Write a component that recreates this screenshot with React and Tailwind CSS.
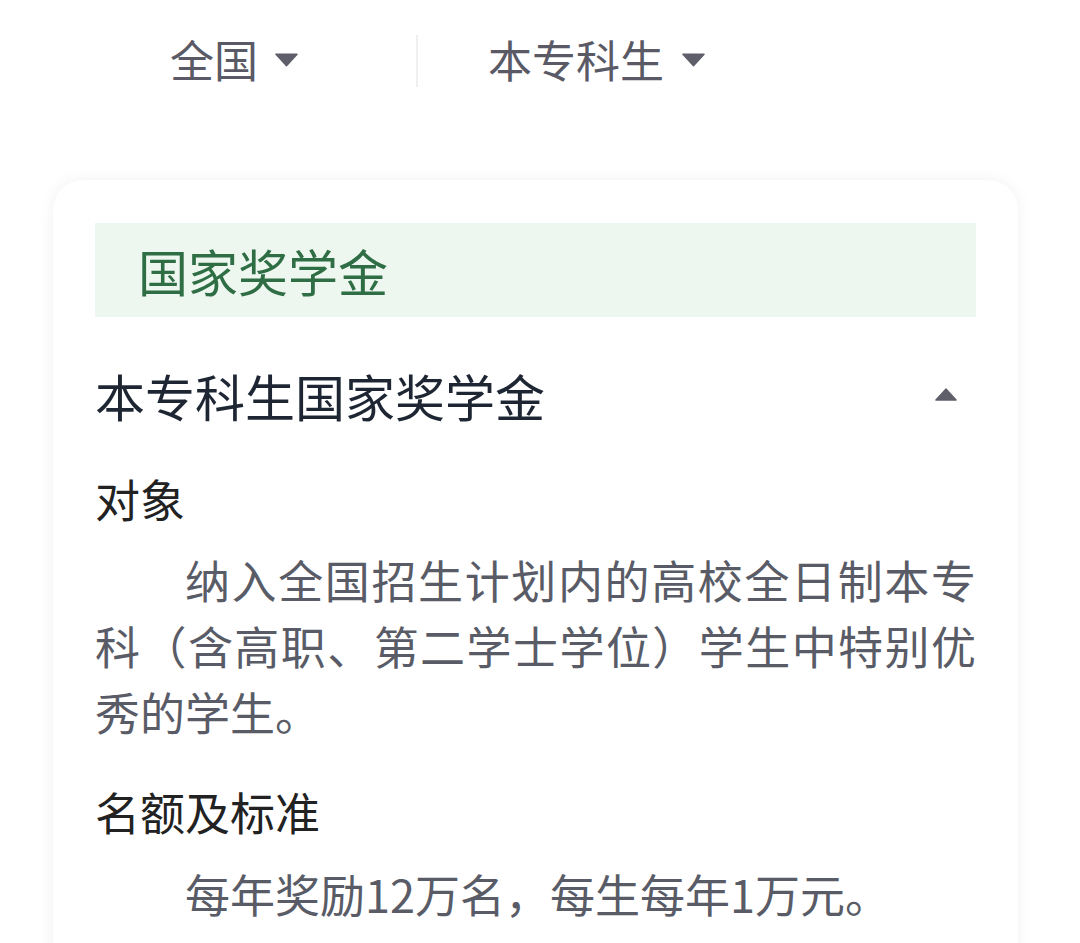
import React from "react";

const Down = ({ className }) => (
  <svg viewBox="0 0 24 14" className={className} fill="#5f5f6b">
    <path d="M1 1 L23 1 L12 13 Z" strokeLinejoin="round" stroke="#5f5f6b" strokeWidth="1.5" />
  </svg>
);

const Up = ({ className }) => (
  <svg viewBox="0 0 24 14" className={className} fill="#5f5f6b">
    <path d="M1 13 L23 13 L12 1 Z" strokeLinejoin="round" stroke="#5f5f6b" strokeWidth="1.5" />
  </svg>
);

export default function App() {
  const font = { fontFamily: '"Noto Sans CJK SC", "Noto Sans", sans-serif' };
  return (
    <div className="w-[1080px] h-[943px] overflow-hidden bg-white" style={font}>
      <div className="h-[118px] flex items-center pl-[170px] text-[44px] text-[#5a5a66]">
        <div className="flex items-center">
          <span className="leading-none">全国</span>
          <Down className="w-[23px] h-[14px] ml-[17px] mt-[2px]" />
        </div>
        <div className="w-[2px] h-[52px] bg-[#efefef] ml-[118px] mt-[4px]" />
        <div className="flex items-center ml-[70px]">
          <span className="leading-none">本专科生</span>
          <Down className="w-[23px] h-[14px] ml-[18px] mt-[2px]" />
        </div>
      </div>

      <div className="mt-[62px] ml-[53px] w-[965px] h-[900px] bg-white rounded-[30px] shadow-[0_0_16px_rgba(0,0,0,0.06)] px-[42px] pt-[43px]">
        <div className="h-[94px] bg-[#edf7ef] flex items-center pl-[43px] text-[50px] text-[#2f6e45] leading-none">
          国家奖学金
        </div>

        <div className="mt-[45px] h-[66px] flex items-center justify-between pr-[19px]">
          <span className="text-[50px] leading-[66px] text-[#1e2633]">本专科生国家奖学金</span>
          <Up className="w-[22px] h-[13px] -mt-[2px]" />
        </div>

        <div className="mt-[38px] text-[45px] leading-[66px] text-[#222]">对象</div>
        <p className="mt-[15px] text-[45px] leading-[66px] text-[#595c67] text-justify indent-[2em]">
          纳入全国招生计划内的高校全日制本专科（含高职、第二学士学位）学生中特别优秀的学生。
        </p>

        <div className="mt-[34px] text-[45px] leading-[66px] text-[#222]">名额及标准</div>
        <p className="mt-[16px] text-[45px] leading-[66px] text-[#595c67] text-justify indent-[2em]">
          每年奖励12万名，每生每年1万元。
        </p>
      </div>
    </div>
  );
}
